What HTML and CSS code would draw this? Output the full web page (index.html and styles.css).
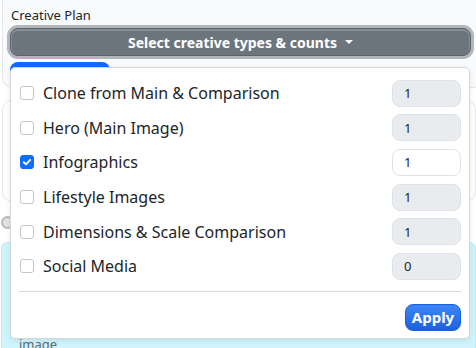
FILE: index.html
```html
<!DOCTYPE html>
<html lang="en">
<head>
    <meta charset="UTF-8">
    <meta name="viewport" content="width=device-width, initial-scale=1.0">
    <title>Creative Plan</title>
    <link rel="stylesheet" href="styles.css">
</head>
<body>

    <!-- Creative plan panel -->
    <div class="panel">
        <label class="field-label">Creative Plan</label>
        <button class="dropdown-toggle">Select creative types &amp; counts<span class="caret"></span></button>
        <div class="tab-strip"><span class="tab-active"></span></div>
    </div>

    <div class="card"></div>

    <div class="radio-row"><span class="radio"></span></div>

    <div class="alert">
        <span class="alert-text">image</span>
    </div>

    <!-- Open dropdown menu -->
    <div class="dropdown-menu">
        <div class="menu-row">
            <label class="option"><span class="check"></span>Clone from Main &amp; Comparison</label>
            <input class="count" type="text" value="1" disabled>
        </div>
        <div class="menu-row">
            <label class="option"><span class="check"></span>Hero (Main Image)</label>
            <input class="count" type="text" value="1" disabled>
        </div>
        <div class="menu-row">
            <label class="option"><span class="check checked"><svg viewBox="0 0 14 14" width="14" height="14"><path d="M3.8 7.2 L6 9.3 L10.2 4.9" fill="none" stroke="#fff" stroke-width="1.9" stroke-linecap="round" stroke-linejoin="round"/></svg></span>Infographics</label>
            <input class="count" type="text" value="1">
        </div>
        <div class="menu-row">
            <label class="option"><span class="check"></span>Lifestyle Images</label>
            <input class="count" type="text" value="1" disabled>
        </div>
        <div class="menu-row">
            <label class="option"><span class="check"></span>Dimensions &amp; Scale Comparison</label>
            <input class="count" type="text" value="1" disabled>
        </div>
        <div class="menu-row">
            <label class="option"><span class="check"></span>Social Media</label>
            <input class="count" type="text" value="0" disabled>
        </div>
        <hr class="divider">
        <div class="menu-footer">
            <button class="apply-btn">Apply</button>
        </div>
    </div>

</body>
</html>
```

FILE: styles.css
```css
/* Base Styling */
body {
    font-family: 'Noto Sans', 'Open Sans', Arial, sans-serif;
    color: #212529;
    margin: 0;
    padding: 0;
    background-color: #fff;
    overflow: hidden;
    position: relative;
    height: 348px;
}

/* Top panel */
.panel {
    margin-left: 2px;
    width: 480px;
    box-sizing: border-box;
    background-color: #f9fafc;
    border: 1px solid #e4e7eb;
    border-top: none;
    border-radius: 0 0 10px 10px;
    padding: 6px 0 15px 7px;
}

.field-label {
    display: block;
    font-size: 13px;
    line-height: 19px;
    color: #212529;
    margin-left: 1px;
}

.dropdown-toggle {
    display: flex;
    justify-content: center;
    align-items: center;
    width: 461px;
    height: 28px;
    margin-top: 3px;
    background-color: #6c757d;
    color: #fff;
    border: 1px solid #5c636a;
    border-radius: 8px;
    box-shadow: 0 0 0 3px #b3b7bb, inset 0 1px 0 1px rgba(255, 255, 255, 0.18);
    font-family: 'Noto Sans', 'Open Sans', Arial, sans-serif;
    font-size: 14px;
    font-weight: 700;
    padding: 0;
}

.caret {
    display: inline-block;
    margin-left: 8px;
    border-top: 4px solid #fff;
    border-left: 4px solid transparent;
    border-right: 4px solid transparent;
}

.tab-strip {
    margin-top: 6px;
    height: 10px;
}

.tab-active {
    display: block;
    width: 100px;
    height: 10px;
    background-color: #0d6efd;
    border-radius: 8px 8px 0 0;
}

/* Cards behind the menu */
.card {
    margin: 12px 0 0 2px;
    height: 100px;
    background-color: #fff;
    border: 1px solid #e3e6ea;
    border-radius: 10px;
}

.radio-row {
    height: 40px;
    display: flex;
    align-items: center;
    padding-left: 1px;
}

.radio {
    width: 9px;
    height: 9px;
    border-radius: 50%;
    border: 2px solid #b9b9b9;
    background-color: #e2e2e2;
}

.alert {
    margin-left: 1px;
    height: 120px;
    background-color: #cff4fc;
    border: 1px solid #b6effb;
    border-radius: 6px;
    padding: 89px 0 0 17px;
    box-sizing: border-box;
}

.alert-text {
    font-size: 13px;
    color: #5a6a70;
}

/* Dropdown menu */
.dropdown-menu {
    position: absolute;
    top: 67px;
    left: 10px;
    width: 460px;
    box-sizing: border-box;
    background-color: #fff;
    border: 1px solid #d3d7db;
    border-radius: 5px;
    box-shadow: 0 2px 6px rgba(0, 0, 0, 0.08);
    padding: 8px 8px 7px 9px;
}

.menu-row {
    display: flex;
    align-items: center;
    justify-content: space-between;
    height: 34.6px;
}

.option {
    display: flex;
    align-items: center;
    font-size: 16px;
    color: #212529;
}

.check {
    width: 14px;
    height: 14px;
    box-sizing: border-box;
    border: 1px solid #c4c8cc;
    border-radius: 3px;
    background-color: #fff;
    margin-right: 9px;
    display: flex;
}

.check.checked {
    background-color: #0d6efd;
    border-color: #0d6efd;
}

.check svg {
    margin: -1px;
}

.count {
    width: 69px;
    height: 27px;
    box-sizing: border-box;
    border: 1px solid #dee2e6;
    border-radius: 8px;
    background-color: #fff;
    padding: 0 11px;
    font-family: 'Noto Sans', 'Open Sans', Arial, sans-serif;
    font-size: 13px;
    color: #212529;
}

.count:disabled {
    background-color: #e9ecef;
    color: #212529;
}

.divider {
    border: none;
    border-top: 1px solid #d8dbde;
    margin: 7px 0 12px -1px;
}

.menu-footer {
    display: flex;
    justify-content: flex-end;
}

.apply-btn {
    width: 56px;
    height: 27px;
    border: 1px solid #1b5fd9;
    border-radius: 8px;
    background: linear-gradient(#3c87f7, #1d60dc);
    color: #fff;
    font-family: 'Noto Sans', 'Open Sans', Arial, sans-serif;
    font-size: 15px;
    font-weight: 700;
    padding: 0;
}
```
